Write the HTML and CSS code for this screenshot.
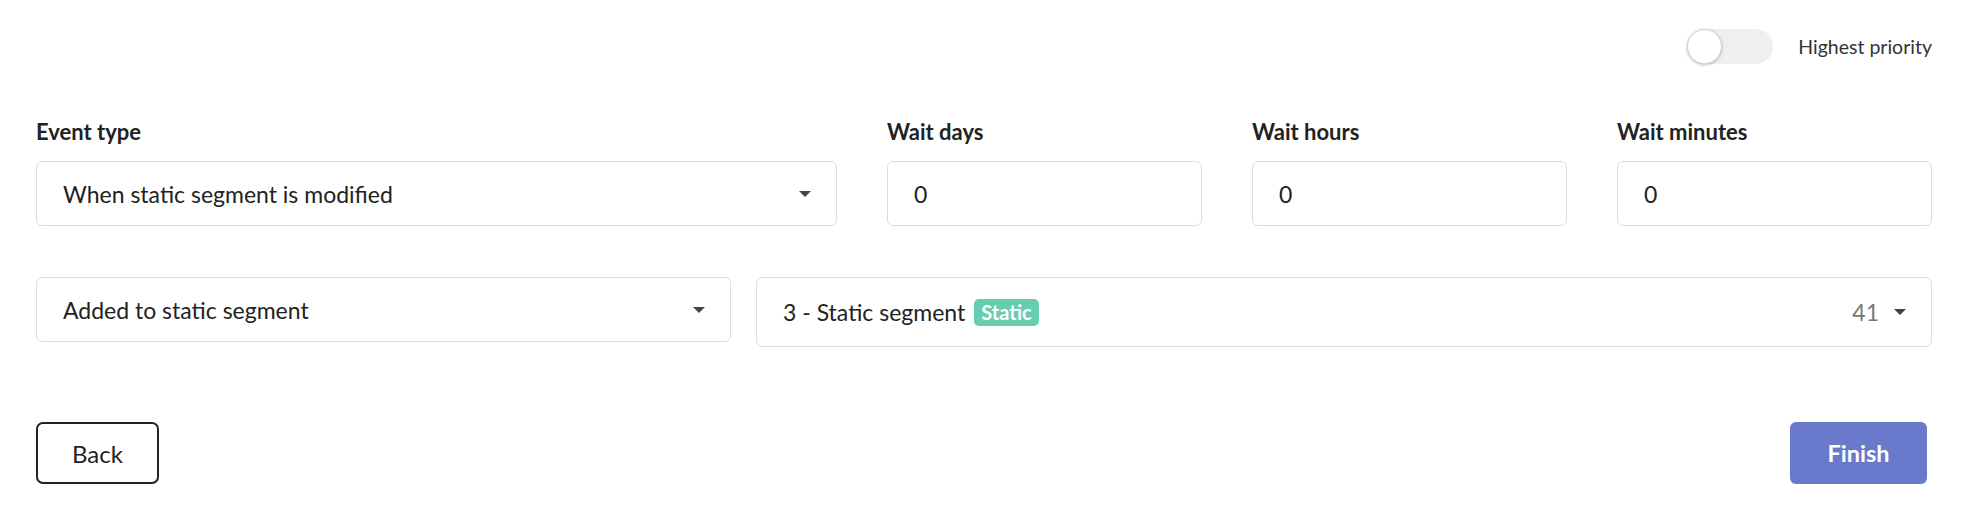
FILE: index.html
```html
<!DOCTYPE html>
<html lang="en">
<head>
<meta charset="utf-8">
<title>Automation step</title>
<link rel="stylesheet" href="styles.css">
</head>
<body>
<div class="page">
  <div class="top-bar">
    <div class="toggle">
      <span class="track"><span class="knob"></span></span>
      <span class="toggle-label">Highest priority</span>
    </div>
  </div>

  <div class="row row-1">
    <div class="field">
      <div class="label">Event type</div>
      <div class="control select">
        <span class="value">When static segment is modified</span>
        <span class="caret"></span>
      </div>
    </div>
    <div class="field">
      <div class="label">Wait days</div>
      <div class="control input"><span class="value">0</span></div>
    </div>
    <div class="field">
      <div class="label">Wait hours</div>
      <div class="control input"><span class="value">0</span></div>
    </div>
    <div class="field">
      <div class="label">Wait minutes</div>
      <div class="control input"><span class="value">0</span></div>
    </div>
  </div>

  <div class="row row-2">
    <div class="control select">
      <span class="value">Added to static segment</span>
      <span class="caret"></span>
    </div>
    <div class="control select tall">
      <span class="value">3 - Static segment <span class="badge">Static</span></span>
      <span class="meta"><span class="count">41</span><span class="caret"></span></span>
    </div>
  </div>

  <div class="actions">
    <button class="btn btn-back" type="button">Back</button>
    <button class="btn btn-finish" type="button">Finish</button>
  </div>
</div>
</body>
</html>
```

FILE: styles.css
```css
* { box-sizing: border-box; }

html, body {
  margin: 0;
  padding: 0;
  background: #ffffff;
}

body {
  font-family: "Lato", "Liberation Sans", sans-serif;
  color: #222222;
}

.page {
  padding: 0 35px 0 36px;
}

.top-bar {
  display: flex;
  justify-content: flex-end;
  padding-top: 28px;
}

.toggle {
  display: flex;
  align-items: center;
  gap: 25px;
  height: 36px;
}

.track {
  position: relative;
  display: block;
  width: 86px;
  height: 35px;
  border-radius: 18px;
  background: #efefef;
}

.knob {
  position: absolute;
  left: 0;
  top: 0;
  width: 35px;
  height: 35px;
  border-radius: 50%;
  background: #ffffff;
  border: 1px solid #d4d4d4;
  box-shadow: 0 1px 3px rgba(0, 0, 0, 0.25);
}

.toggle-label {
  font-size: 19.5px;
  color: #333333;
}

.row {
  display: grid;
}

.row-1 {
  margin-top: 54px;
  grid-template-columns: 1fr 315px 315px 315px;
  column-gap: 50px;
}

.label {
  font-size: 22px;
  font-weight: 700;
  line-height: 28px;
  margin-bottom: 15px;
  color: #222222;
}

.control {
  display: flex;
  align-items: center;
  justify-content: space-between;
  height: 65px;
  padding: 0 25px 0 26px;
  border: 1px solid #dddddd;
  border-radius: 6px;
  background: #ffffff;
  font-size: 23px;
}

.control.tall {
  height: 70px;
}

.value {
  display: flex;
  align-items: center;
  gap: 9px;
  color: #222222;
}

.caret {
  display: block;
  width: 0;
  height: 0;
  border-left: 6px solid transparent;
  border-right: 6px solid transparent;
  border-top: 6px solid #444444;
}

.meta {
  display: flex;
  align-items: center;
  gap: 15px;
}

.count {
  color: #777777;
}

.badge {
  display: inline-flex;
  align-items: center;
  height: 27px;
  padding: 0 7px;
  border-radius: 5px;
  background: #66cdb0;
  color: #ffffff;
  font-size: 20px;
  font-weight: 700;
}

.row-2 {
  margin-top: 51px;
  grid-template-columns: 695px 1fr;
  column-gap: 25px;
  align-items: start;
}

.actions {
  display: flex;
  justify-content: space-between;
  margin-top: 75px;
  padding-right: 5px;
}

.btn {
  font-family: inherit;
  font-size: 23.5px;
  height: 62px;
  border-radius: 7px;
  cursor: pointer;
}

.btn-back {
  width: 123px;
  background: #ffffff;
  color: #222222;
  border: 2px solid #222222;
  font-size: 24px;
}

.btn-finish {
  width: 137px;
  background: #6979cc;
  color: #ffffff;
  border: none;
  border-radius: 6px;
  font-weight: 700;
}
```
